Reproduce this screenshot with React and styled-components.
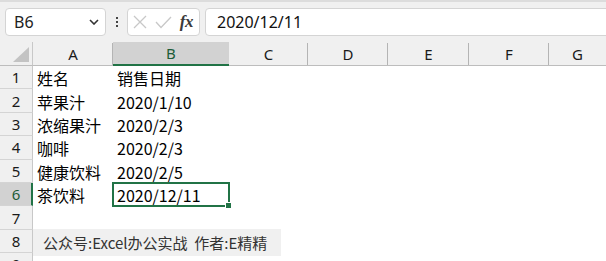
import React from "react";
import styled, { createGlobalStyle } from "styled-components";

const Global = createGlobalStyle`
  html, body { margin: 0; padding: 0; background: #ffffff; overflow: hidden; }
  body { font-family: "Noto Sans", "Noto Sans CJK SC", sans-serif; }
`;

const Page = styled.div`
  width: 606px;
  height: 261px;
  overflow: hidden;
  display: flex;
  flex-direction: column;
  background: #fff;
`;

const Toolbar = styled.div`
  flex: 0 0 42px;
  height: 42px;
  box-sizing: border-box;
  display: flex;
  align-items: center;
  padding: 0 0 0 5px;
  background: #f0f0f0;
  border-top: 2px solid #dcdcdc;
  overflow: hidden;
`;

const Box = styled.div`
  height: 28px;
  flex-shrink: 0;
  box-sizing: border-box;
  background: #fff;
  border: 1px solid #d4d4d4;
  border-radius: 4px;
  display: flex;
  align-items: center;
`;

const NameBox = styled(Box)`
  width: 101px;
  padding: 0 6px 0 8px;
  justify-content: space-between;
  font-size: 16px;
  color: #222;
`;

const Dots = styled.div`
  width: 21px;
  flex-shrink: 0;
  display: flex;
  flex-direction: column;
  align-items: center;
  gap: 2px;
  & > span { width: 2px; height: 2px; background: #444; display: block; }
`;

const FxBox = styled(Box)`
  width: 73px;
  padding: 0 4px 0 5px;
  justify-content: space-between;
  margin-right: 5px;
`;

const Fx = styled.span`
  font-family: "Liberation Serif", "DejaVu Serif", serif;
  font-style: italic;
  font-weight: bold;
  font-size: 17px;
  color: #3a3a3a;
  margin-right: 2px;
  letter-spacing: -0.5px;
`;

const FormulaInput = styled(Box)`
  flex: 1 0 auto;
  margin-right: -6px;
  padding-left: 11px;
  font-size: 16px;
  color: #111;
`;

const Sheet = styled.div`
  flex-shrink: 0;
  display: grid;
  grid-template-columns: 33px 80px 116px 79px 80px 81px 80px 1fr;
  grid-template-rows: 24px repeat(9, 23.4px);
  font-family: "Noto Sans CJK SC", "Noto Sans", sans-serif;
`;

const Corner = styled.div`
  background: #f0f0f0;
  border-right: 1px solid #c8c8c8;
  border-bottom: 1px solid #bdbdbd;
  position: relative;
  &::after {
    content: "";
    position: absolute;
    right: 3px;
    bottom: 3px;
    width: 0;
    height: 0;
    border-left: 16px solid transparent;
    border-bottom: 15px solid #c3c3c3;
  }
`;

const ColHead = styled.div`
  box-sizing: border-box;
  background: ${(p) => (p.$active ? "#d2d2d2" : "#f0f0f0")};
  color: ${(p) => (p.$active ? "#1d5c38" : "#1a1a1a")};
  border-bottom: ${(p) => (p.$active ? "2px solid #217346" : "1px solid #bdbdbd")};
  display: flex;
  align-items: center;
  justify-content: center;
  font-family: "Noto Sans", sans-serif;
  font-size: 15px;
  position: relative;
  &::after {
    content: "";
    position: absolute;
    right: 0;
    top: 1px;
    bottom: 0;
    width: 1px;
    background: ${(p) => (p.$last || p.$active ? "transparent" : "#b4b4b4")};
  }
`;

const RowHead = styled.div`
  background: ${(p) => (p.$active ? "#d2d2d2" : "#f0f0f0")};
  color: ${(p) => (p.$active ? "#1d5c38" : "#1a1a1a")};
  border-right: ${(p) => (p.$active ? "2px solid #217346" : "1px solid #c8c8c8")};
  border-bottom: 1px solid #d4d4d4;
  box-sizing: border-box;
  display: flex;
  align-items: center;
  justify-content: center;
  padding-left: ${(p) => (p.$active ? "1px" : "0")};
  font-family: "Noto Sans", sans-serif;
  font-size: 15px;
`;

const Cell = styled.div`
  display: flex;
  align-items: center;
  padding: 1px 0 0 4px;
  font-size: 16px;
  color: #000;
  white-space: nowrap;
  position: relative;
`;

const Selected = styled.div`
  position: absolute;
  left: -1px;
  top: -1px;
  right: -1px;
  bottom: -1px;
  border: 2px solid #217346;
  pointer-events: none;
  &::after {
    content: "";
    position: absolute;
    right: -4px;
    bottom: -4px;
    width: 5px;
    height: 5px;
    background: #217346;
    border: 1px solid #fff;
  }
`;

const NoteCell = styled.div`
  grid-column: 2 / span 3;
  position: relative;
`;

const Note = styled.div`
  position: absolute;
  left: 0;
  top: -1px;
  width: 248px;
  height: 27px;
  background: #f0f0f0;
  display: flex;
  align-items: center;
  padding-left: 10px;
  box-sizing: border-box;
  font-size: 15px;
  color: #333;
  white-space: nowrap;
`;

const cols = ["A", "B", "C", "D", "E", "F", "G"];
const data = [
  ["姓名", "销售日期"],
  ["苹果汁", "2020/1/10"],
  ["浓缩果汁", "2020/2/3"],
  ["咖啡", "2020/2/3"],
  ["健康饮料", "2020/2/5"],
  ["茶饮料", "2020/12/11"],
];

export default function App() {
  return (
    <Page>
      <Global />
      <Toolbar>
        <NameBox>
          <span>B6</span>
          <svg width="10" height="6" viewBox="0 0 10 6">
            <path d="M1 1 L5 5 L9 1" fill="none" stroke="#333" strokeWidth="1.6" />
          </svg>
        </NameBox>
        <Dots>
          <span />
          <span />
          <span />
        </Dots>
        <FxBox>
          <svg width="14" height="14" viewBox="0 0 14 14">
            <path d="M1 1 L13 13 M13 1 L1 13" stroke="#c8c8c8" strokeWidth="1.3" />
          </svg>
          <svg width="17" height="13" viewBox="0 0 17 13">
            <path d="M1 6 L6 11.5 L16 1" fill="none" stroke="#c8c8c8" strokeWidth="1.3" />
          </svg>
          <Fx>fx</Fx>
        </FxBox>
        <FormulaInput>2020/12/11</FormulaInput>
      </Toolbar>
      <Sheet>
        <Corner />
        {cols.map((c) => (
          <ColHead key={c} $active={c === "B"} $last={c === "G"}>
            {c}
          </ColHead>
        ))}
        {Array.from({ length: 9 }).map((_, r) => {
          const row = data[r] || ["", ""];
          const n = r + 1;
          if (n === 8) {
            return (
              <React.Fragment key={n}>
                <RowHead>{n}</RowHead>
                <NoteCell>
                  <Note>公众号:Excel办公实战&nbsp;&nbsp;作者:E精精</Note>
                </NoteCell>
                <Cell />
                <Cell />
                <Cell />
                <Cell />
              </React.Fragment>
            );
          }
          return (
            <React.Fragment key={n}>
              <RowHead $active={n === 6}>{n}</RowHead>
              <Cell>{row[0]}</Cell>
              <Cell>
                {row[1]}
                {n === 6 && <Selected />}
              </Cell>
              <Cell />
              <Cell />
              <Cell />
              <Cell />
              <Cell />
            </React.Fragment>
          );
        })}
      </Sheet>
    </Page>
  );
}
